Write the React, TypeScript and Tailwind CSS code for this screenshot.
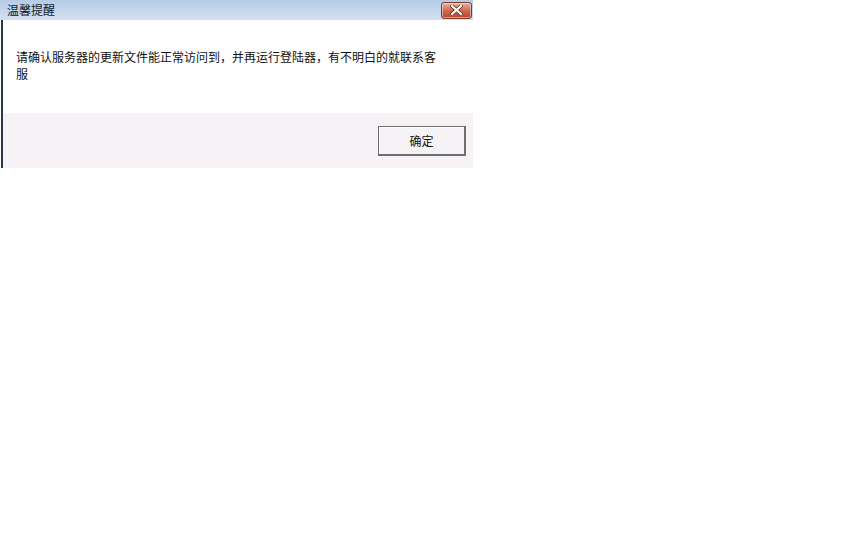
export default function App() {
  return (
    <div className="min-h-screen bg-white" style={{ fontFamily: '"Noto Sans CJK SC", "Liberation Sans", sans-serif' }}>
      <div className="w-[473px]">
        <div className="flex h-[20px] items-center justify-between bg-gradient-to-b from-[#b6cbe7] to-[#d5e1f1] pl-[7px] pr-[1px]">
          <span className="text-[12px] leading-none text-[#0f1a28]">温馨提醒</span>
          <button
            type="button"
            className="flex h-[17px] w-[31px] items-center justify-center rounded-[3px] border border-[#7a3a2e] bg-gradient-to-b from-[#eab3a2] via-[#cf6a50] to-[#b8442c] shadow-[inset_0_0_0_1px_rgba(255,255,255,0.45)]"
          >
            <svg width="13" height="10" viewBox="0 0 13 10">
              <path d="M2 1 L11 9 M11 1 L2 9" stroke="#5a2a20" strokeWidth="3.6" strokeLinecap="square" />
              <path d="M2 1 L11 9 M11 1 L2 9" stroke="#ffffff" strokeWidth="2.2" strokeLinecap="square" />
            </svg>
          </button>
        </div>
        <div className="ml-[1px] border-l-2 border-[#2a3848]">
          <div className="h-[93px] bg-white pl-[13px] pr-[30px] pt-[28px]">
            <p className="text-[12px] leading-[17px] text-[#111111]">
              请确认服务器的更新文件能正常访问到，并再运行登陆器，有不明白的就联系客服
            </p>
          </div>
          <div className="flex h-[55px] justify-end bg-[#f6f2f6] pr-[7px] pt-[13px]">
            <button
              type="button"
              className="h-[30px] w-[88px] border border-b-2 border-r-2 border-[#6e6e6e] bg-[#f5f3f5] text-[12px] text-[#111111] shadow-[inset_1px_1px_0_#ffffff]"
            >
              确定
            </button>
          </div>
        </div>
      </div>
    </div>
  )
}
